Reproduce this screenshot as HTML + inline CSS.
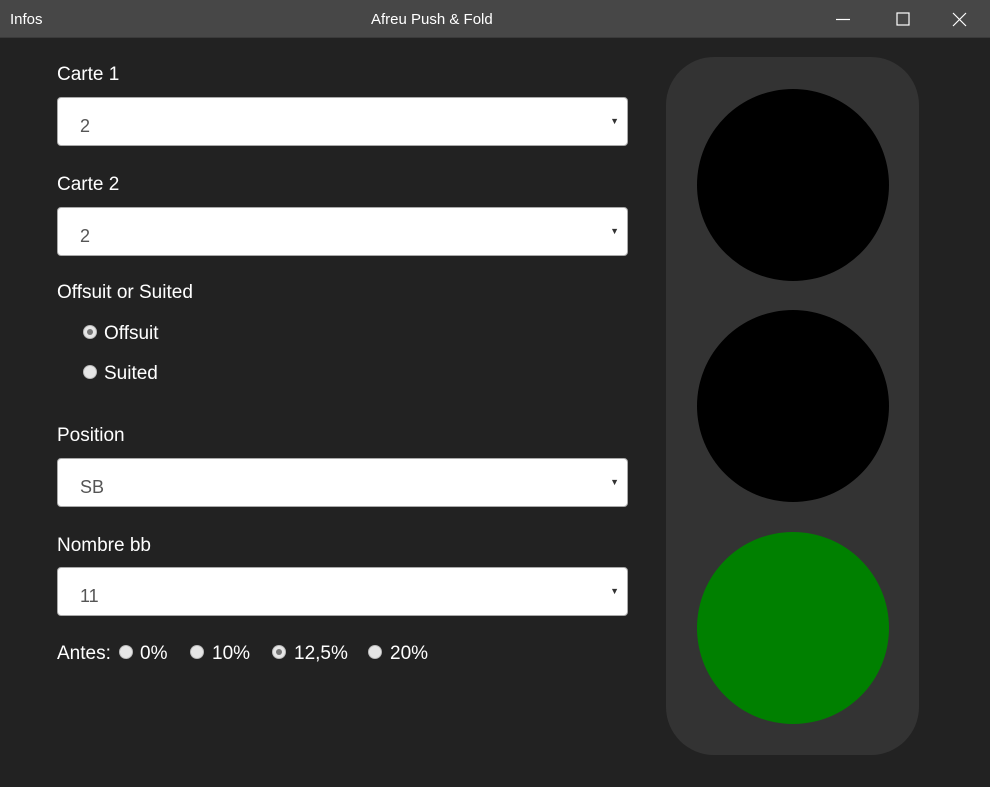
<!DOCTYPE html>
<html><head><meta charset="utf-8"><style>
*{margin:0;padding:0;box-sizing:border-box}
body{width:990px;height:787px;background:#222;font-family:"Liberation Sans",sans-serif;color:#fff;position:relative;overflow:hidden}
.tb{position:absolute;left:0;top:0;width:990px;height:38px;background:#474747;border-bottom:1px solid #3a3a3a}
.t{position:absolute;font-size:15px;top:11px}
.lbl{position:absolute;left:57px;font-size:19px}
.sel{position:absolute;left:57px;width:571px;height:49px;background:#fff;border-radius:4px;border:1px solid #aaa;color:#555;font-size:18px;padding:18px 0 0 22px}
.sel:after{content:"▼";position:absolute;right:8px;top:18px;font-size:9px;color:#333}
.r{position:absolute;width:14px;height:14px;border-radius:50%;background:#e6e6e6;border:1px solid #bbb}
.r.on:after{content:"";position:absolute;left:3px;top:3px;width:6px;height:6px;border-radius:50%;background:#777}
.rt{position:absolute;font-size:19px}
.panel{position:absolute;left:666px;top:57px;width:253px;height:698px;background:#333;border-radius:48px}
.c{position:absolute;left:697px;width:192px;height:192px;border-radius:50%;background:#000}
</style></head><body>
<div class="tb">
<div class="t" style="left:10px">Infos</div>
<div class="t" style="left:371px">Afreu Push &amp; Fold</div>
<svg style="position:absolute;left:830px;top:10px" width="140" height="20" stroke="#fff" stroke-width="1.2" fill="none">
<path d="M6 9.5H20"/><rect x="67" y="3" width="12" height="12"/><path d="M123 3L136 16M136 3L123 16"/></svg>
</div>
<div class="lbl" style="top:64px">Carte 1</div>
<div class="sel" style="top:97px">2</div>
<div class="lbl" style="top:174px">Carte 2</div>
<div class="sel" style="top:207px">2</div>
<div class="lbl" style="top:282px">Offsuit or Suited</div>
<div class="r on" style="left:83px;top:325px"></div><div class="rt" style="left:104px;top:323px">Offsuit</div>
<div class="r" style="left:83px;top:365px"></div><div class="rt" style="left:104px;top:363px">Suited</div>
<div class="lbl" style="top:425px">Position</div>
<div class="sel" style="top:458px">SB</div>
<div class="lbl" style="top:535px">Nombre bb</div>
<div class="sel" style="top:567px">11</div>
<div class="rt" style="left:57px;top:643px">Antes:</div>
<div class="r" style="left:119px;top:645px"></div><div class="rt" style="left:140px;top:643px">0%</div>
<div class="r" style="left:190px;top:645px"></div><div class="rt" style="left:212px;top:643px">10%</div>
<div class="r on" style="left:272px;top:645px"></div><div class="rt" style="left:294px;top:643px">12,5%</div>
<div class="r" style="left:368px;top:645px"></div><div class="rt" style="left:390px;top:643px">20%</div>
<div class="panel"></div>
<div class="c" style="top:89px"></div>
<div class="c" style="top:310px"></div>
<div class="c" style="top:532px;background:#008000"></div>
</body></html>
